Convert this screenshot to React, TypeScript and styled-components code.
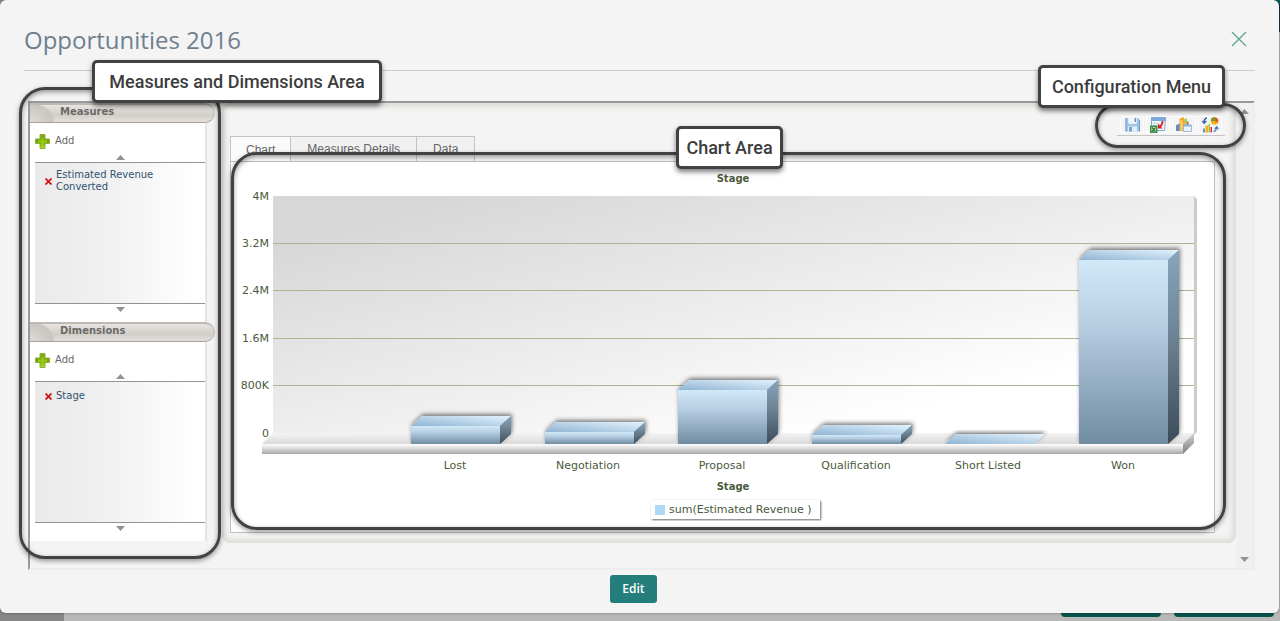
import React from 'react';
import styled, { createGlobalStyle } from 'styled-components';

const Global = createGlobalStyle`
  * { box-sizing: border-box; }
  body { margin: 0; background: #b7b8b7; font-family: "DejaVu Sans", Verdana, sans-serif; }
  button { font: inherit; padding: 0; border: 0; background: none; cursor: pointer; }
`;

const Page = styled.div`
  position: relative;
  background:
    linear-gradient(#0d5a55 4px, #14344a 4px 32px, transparent 32px) right top / 6px 100% no-repeat,
    linear-gradient(90deg, #868786 64px, #b7b8b7 64px);
`;

const Modal = styled.main`
  position: relative;
  margin-right: 1px;
  padding: 0 24px 10px;
  background: #f4f4f4;
  border-radius: 6px;
  box-shadow: 0 0 3px rgba(0, 0, 0, 0.4);
`;

const ModalHeader = styled.header`
  display: flex;
  align-items: center;
  justify-content: space-between;
  height: 71px;
  padding: 9px 8px 0 0;
  border-bottom: 1px solid #cccccc;
`;

const Title = styled.h1`
  margin: 0;
  font: 400 24px/32px "Open Sans", sans-serif;
  color: #6f7f8e;
`;

const CloseButton = styled.button`
  width: 16px;
  height: 16px;
  svg { display: block; }
`;

const Frame = styled.section`
  display: flex;
  align-items: stretch;
  margin: 30px 0 0 4px;
  min-height: 469px;
  border: 2px solid #ededed;
  border-top-color: #999999;
  border-left-color: #999999;
`;

const Sidebar = styled.aside`
  flex: none;
  width: 192px;
`;

const SectionTitle = styled.h2`
  width: 185px;
  height: 20px;
  margin: 0;
  padding-left: 30px;
  font-size: 10px;
  line-height: 14px;
  font-weight: 700;
  color: #6b6a68;
  border-top: 2px solid #bdbab4;
  border-bottom: 1px solid #a8a29b;
  border-right: 1px solid #c4c1bb;
  border-radius: 0 10px 10px 0;
  background:
    radial-gradient(ellipse 25px 20px at 0 100%, #dedbd7 0%, #c9c6c1 90%, transparent 100%),
    linear-gradient(#e8e5e1, #d2cec8 60%, #e4e0dc);
`;

const SectionBody = styled.div`
  width: 177px;
  height: 199px;
  padding: 8px 2px 0 5px;
  background: linear-gradient(90deg, #fff 174px, #d9d9d9 177px);
`;

const AddButton = styled.button`
  display: flex;
  align-items: center;
  gap: 5px;
  height: 20px;
  font-size: 10px;
  color: #666666;
  svg { display: block; }
`;

const AddLabel = styled.span`
  padding-bottom: 2px;
`;

const ScrollButton = styled.button<{ $down?: boolean }>`
  display: flex;
  justify-content: center;
  align-items: ${p => (p.$down ? 'flex-start' : 'flex-end')};
  width: 100%;
  height: 11px;
  padding: ${p => (p.$down ? '3px 0 0' : '0 0 2px')};
  svg { display: block; }
`;

const ItemList = styled.ul`
  height: 142px;
  margin: 0;
  padding: 6px 10px;
  list-style: none;
  border-top: 1px solid #939393;
  border-bottom: 1px solid #939393;
  background: linear-gradient(90deg, #eaeaea, #f0f0f0 40%, #ffffff 95%);
`;

const Item = styled.li`
  display: flex;
  align-items: center;
  gap: 4px;
  min-height: 16px;
  font-size: 10px;
  line-height: 12px;
`;

const RemoveButton = styled.button`
  flex: none;
  width: 7px;
  height: 8px;
  svg { display: block; }
`;

const ItemLink = styled.a`
  color: #31536f;
  text-decoration: none;
`;

const Content = styled.div`
  flex: 1;
  min-width: 0;
  align-self: flex-start;
  height: 440px;
  padding: 0 11px 0 8px;
  background: #f4f4f4;
  border-radius: 8px;
  box-shadow: inset 0 0 5px 4px #dfddd9;
`;

const TopRow = styled.div`
  display: flex;
  justify-content: space-between;
  align-items: flex-end;
  height: 58px;
`;

const Tabs = styled.div`
  display: flex;
`;

const Tab = styled.button<{ $active?: boolean }>`
  height: 25px;
  padding: ${p => (p.$active ? '2px 15px 0' : '0 16px')};
  font: 12px/14px "Liberation Sans", Arial, sans-serif;
  color: #666666;
  background: ${p => (p.$active ? '#fbfbfb' : '#f1f1f1')};
  border: 1px solid #bfc5c7;
  border-bottom: 0;
  & + & { border-left: 0; }
`;

const Toolbar = styled.div`
  display: flex;
  align-self: flex-start;
  gap: 2px;
  margin-top: 13px;
  padding: 0 3px 2px;
  border-bottom: 1px solid #c4c4c4;
`;

const ToolButton = styled.button`
  display: flex;
  align-items: center;
  justify-content: center;
  width: 24px;
  height: 17px;
  background: #f4f4f4;
  border: 1px solid #fcfcfc;
`;

const TabPanel = styled.div`
  height: 372px;
  margin-right: 10px;
  background: #ffffff;
  border: 1px solid #bfbfbf;
`;

const Chart = styled.svg`
  display: block;
  width: 100%;
  height: 370px;
  font-family: "DejaVu Sans", Verdana, sans-serif;
  font-size: 11px;
  fill: #4a5a3a;
`;

const ScrollTrack = styled.div`
  display: flex;
  flex-direction: column;
  justify-content: space-between;
  flex: none;
  width: 17px;
  padding: 2px 0 3px;
  background: #f0f0f0;
`;

const Footer = styled.footer`
  display: flex;
  justify-content: center;
  padding-top: 5px;
`;

const EditButton = styled.button`
  height: 28px;
  width: 47px;
  margin-right: 12px;
  border-radius: 3px;
  background: #237e7c;
  color: #ffffff;
  font: 600 12px/28px "Open Sans", sans-serif;
`;

const Backdrop = styled.div`
  display: flex;
  justify-content: flex-end;
  gap: 13px;
  height: 8px;
  padding-right: 6px;
`;

const BackdropButton = styled.div`
  width: 100px;
  height: 4px;
  background: #07564d;
  border-radius: 0 0 4px 4px;
`;

type Box = { $top: number; $left?: number; $right?: number; $width?: number; $height: number; $radius?: number };

const Outline = styled.div<Box>`
  position: absolute;
  top: ${p => p.$top}px;
  left: ${p => (p.$left === undefined ? 'auto' : `${p.$left}px`)};
  right: ${p => (p.$right === undefined ? 'auto' : `${p.$right}px`)};
  width: ${p => (p.$width ? `${p.$width}px` : 'auto')};
  height: ${p => p.$height}px;
  border: 3px solid #424242;
  border-radius: ${p => p.$radius}px;
  box-shadow: 0 2px 5px rgba(0, 0, 0, 0.4), inset 0 2px 5px rgba(0, 0, 0, 0.4);
  pointer-events: none;
`;

const Callout = styled.div<Box>`
  position: absolute;
  top: ${p => p.$top}px;
  left: ${p => (p.$left === undefined ? 'auto' : `${p.$left}px`)};
  right: ${p => (p.$right === undefined ? 'auto' : `${p.$right}px`)};
  width: ${p => p.$width}px;
  height: ${p => p.$height}px;
  border: 3px solid #424242;
  border-radius: 5px;
  background: #ffffff;
  box-shadow: 0 3px 5px rgba(0, 0, 0, 0.5);
  color: #3c3c3c;
  font: 500 18px/37px Roboto, sans-serif;
  text-align: center;
  white-space: nowrap;
`;

const Plus = () => (
  <svg width="15" height="15" viewBox="0 0 15 15" aria-hidden="true">
    <defs>
      <linearGradient id="plus" x1="0" y1="0" x2="0" y2="1">
        <stop offset="0" stopColor="#86a81c" /><stop offset=".5" stopColor="#6fa008" /><stop offset="1" stopColor="#b4e01c" />
      </linearGradient>
    </defs>
    <path d="M5 .5h5V5h4.500v4.500H10v5H5v-5H.5V5H5z" fill="url(#plus)" stroke="#8cb03c" />
    <path d="M7.500 4v8M3 7.500h9" stroke="#98d00c" strokeWidth="2" />
  </svg>
);

const Cross = () => (
  <svg width="7" height="7" viewBox="0 0 7 7" aria-hidden="true">
    <path d="M.5.5l6 6M6.500.5l-6 6" stroke="#d41414" strokeWidth="1.800" />
  </svg>
);

const Arrow = ({ down }: { down?: boolean }) => (
  <svg width="9" height="5" viewBox="0 0 9 5" aria-hidden="true">
    <path d={down ? 'M0 0h9L4.500 5z' : 'M0 5h9L4.500 0z'} fill="#929292" />
  </svg>
);

const SaveIcon = () => (
  <svg width="15" height="15" viewBox="0 0 15 15" aria-hidden="true">
    <path d="M.5 1h3v5.500h8V1h1.500l1.500 1.500V14.500H.5z" fill="#a3c4e6" />
    <path d="M3.500.5h8v6h-8z" fill="#f2f6fb" /><path d="M9.500 1h1.500v4H9.500z" fill="#6f93bd" />
    <path d="M3 9.500h9v5H3z" fill="#e4eef8" /><path d="M4 10h3v4.500H4z" fill="#7ba3d0" />
    <path d="M1 1v13.500M14.500 3v11.500" stroke="#6c9bcf" />
  </svg>
);

const ExportIcon = () => (
  <svg width="16" height="16" viewBox="0 0 16 16" aria-hidden="true">
    <path d="M1.500.5h14l-1 13h-13z" fill="#eef4fb" stroke="#82a9d8" />
    <path d="M1 .5h15V4H1z" fill="#7fa9dc" /><path d="M3 6.500h5M3 8.500h4" stroke="#c4d2e0" />
    <path d="M12.500 4c0 3-1 4.500-2.500 5.500" stroke="#e31b23" strokeWidth="1.800" fill="none" />
    <path d="M8 6.500v5h4.500z" fill="#e31b23" />
    <path d="M0 8.500h7.500V16H0z" fill="#3d8f42" /><path d="M1.500 10h4.500v4.500H1.500z" fill="#dcefdc" /><path d="M2 10.500l3.500 4M5.500 10.500l-3.500 4" stroke="#2f7a34" strokeWidth="1.300" />
  </svg>
);

const ChartSettingsIcon = () => (
  <svg width="16" height="16" viewBox="0 0 16 16" aria-hidden="true">
    <path d="M0 8.500l2-1.500h2.500v7H0z" fill="#5f8fc6" /><path d="M3.500 2.500l2-2h2.500V14h-4.500z" fill="#f5a524" />
    <path d="M4.500 3h2v10.500h-2z" fill="#ffd465" /><path d="M9 6l1-1.500h2.500v4H9z" fill="#e9483f" />
    <path d="M8 2.500l1.500-1h1.500V8H8z" fill="#a8cf5a" />
    <path d="M7.500 8.500h8v6h-8z" fill="#eaf2fb" stroke="#9cbde2" /><path d="M7.500 8.500h8" stroke="#8fb3dd" strokeWidth="2" />
  </svg>
);

const SwitchChartIcon = () => (
  <svg width="17" height="16" viewBox="0 0 17 16" aria-hidden="true">
    <path d="M5 1C2.500 1 2.200 3 2.200 5.500M.3 4L2.200 6.200 4.300 4" stroke="#2a62a8" strokeWidth="1.300" fill="none" />
    <circle cx="12.500" cy="4" r="3.700" fill="#eab90c" /><path d="M12.500 4V.3A3.700 3.700 0 0 0 8.800 4z" fill="#54a830" />
    <path d="M12.500 4l3.500 1.500A3.700 3.700 0 0 0 12.500.3z" fill="#e5532d" />
    <path d="M1 11.500h2v4H1z" fill="#6896cd" /><path d="M3.500 8.500H6V15.500H3.500z" fill="#f5ad18" /><path d="M6.500 7H8v8.500H6.500z" fill="#8dc63f" /><path d="M8.500 10h1.500v5.500H8.500z" fill="#e0332c" />
    <path d="M11.500 14.500c2.500 0 3-2 3-4.500M12.700 12L14.600 9.800 16.500 12" stroke="#4f81bd" strokeWidth="1.300" fill="none" />
  </svg>
);

const ticks = [
  { label: '4M', y: 35 }, { label: '3.2M', y: 82 }, { label: '2.4M', y: 129 },
  { label: '1.6M', y: 177 }, { label: '800K', y: 224 }, { label: '0', y: 272 },
];

const bars = [
  { label: 'Lost', x: 180, top: 264, cx: 224 },
  { label: 'Negotiation', x: 314, top: 270, cx: 357 },
  { label: 'Proposal', x: 447, top: 228, cx: 491 },
  { label: 'Qualification', x: 581, top: 273, cx: 625 },
  { label: 'Short Listed', x: 714, top: 282, cx: 757 },
  { label: 'Won', x: 848, top: 98, cx: 892 },
];

const FLOOR = 282;
const BAR_W = 89;

const StageChart = () => (
  <Chart viewBox="0 0 983 370" role="img" aria-label="Estimated revenue by stage">
    <defs>
      <linearGradient id="wall" x1=".1" y1=".1" x2=".8" y2=".8">
        <stop offset="0" stopColor="#d7d7d7" /><stop offset="1" stopColor="#ffffff" />
      </linearGradient>
      <linearGradient id="floor" x1="0" y1="0" x2="0" y2="1">
        <stop offset="0" stopColor="#f4f4f4" /><stop offset="1" stopColor="#dadada" />
      </linearGradient>
      <linearGradient id="edge" x1="0" y1="0" x2="0" y2="1">
        <stop offset="0" stopColor="#ffffff" /><stop offset=".4" stopColor="#dedede" /><stop offset="1" stopColor="#a6a6a6" />
      </linearGradient>
      <linearGradient id="corner" x1="0" y1="0" x2="0" y2="1">
        <stop offset="0" stopColor="#d2d2d2" /><stop offset="1" stopColor="#7d7d7d" />
      </linearGradient>
      <linearGradient id="front" x1="0" y1="0" x2="0" y2="1">
        <stop offset="0" stopColor="#d2e9f9" /><stop offset=".35" stopColor="#b7cee3" /><stop offset="1" stopColor="#708ca1" />
      </linearGradient>
      <linearGradient id="lid" x1="0" y1="1" x2="1" y2="0">
        <stop offset="0" stopColor="#8fb4d2" /><stop offset="1" stopColor="#e4f3fe" />
      </linearGradient>
      <linearGradient id="side" x1="0" y1="0" x2="0" y2="1">
        <stop offset="0" stopColor="#86a5bd" /><stop offset=".4" stopColor="#708799" /><stop offset="1" stopColor="#3c4b58" />
      </linearGradient>
      <filter id="barShadow" x="-20%" y="-40%" width="140%" height="180%">
        <feDropShadow dx="1" dy="-2" stdDeviation="2" floodColor="#000" floodOpacity=".5" />
      </filter>
      <filter id="boxShadow"><feDropShadow dx="1" dy="1" stdDeviation="1" floodOpacity=".6" /></filter>
      <clipPath id="aboveFloor"><path d="M0 0h983v282H0z" /></clipPath>
    </defs>

    <path d="M42 34h921v238H42z" fill="url(#wall)" />
    <path d="M963 34l3 3v233l-3 3z" fill="#cbcbcb" />
    {ticks.slice(1, 5).map(t => (
      <path key={t.label} d={`M42 ${t.y - .5}h921`} stroke="#a5b890" />
    ))}
    <path d="M42 271h921l-11 11H31z" fill="url(#floor)" />
    <path d="M31 282h921v10H31z" fill="url(#edge)" />
    <path d="M952 282l11-11v10l-11 11z" fill="url(#corner)" />

    <g clipPath="url(#aboveFloor)">
      {bars.map(({ label, x, top }) => (
        <g key={label} filter="url(#barShadow)">
          <path d={`M${x} ${top}l11-10h${BAR_W}l-11 10z`} fill="url(#lid)" />
          {top < FLOOR && (
            <>
              <path d={`M${x} ${top}h${BAR_W}V${FLOOR}H${x}z`} fill="url(#front)" />
              <path d={`M${x + BAR_W} ${top}l11-10V${FLOOR - 10}l-11 10z`} fill="url(#side)" />
            </>
          )}
        </g>
      ))}
    </g>

    {ticks.map(t => (
      <text key={t.label} x="38" y={t.y + 3} textAnchor="end">{t.label}</text>
    ))}
    {bars.map(b => (
      <text key={b.label} x={b.cx} y="307" textAnchor="middle">{b.label}</text>
    ))}
    <text x="502" y="20" textAnchor="middle" fontSize="10" fontWeight="700">Stage</text>
    <text x="502" y="328" textAnchor="middle" fontSize="10" fontWeight="700">Stage</text>
    <path d="M420 338h169v19H420z" fill="#ffffff" filter="url(#boxShadow)" />
    <path d="M424 343h10v10h-10z" fill="#afd8f8" />
    <text x="438" y="351">sum(Estimated Revenue )</text>
  </Chart>
);

const Section = ({ title, items }: { title: string; items: string[] }) => (
  <section>
    <SectionTitle>{title}</SectionTitle>
    <SectionBody>
      <AddButton type="button"><Plus /><AddLabel>Add</AddLabel></AddButton>
      <ScrollButton type="button" aria-label={`Scroll ${title} up`}><Arrow /></ScrollButton>
      <ItemList>
        {items.map(item => (
          <Item key={item}>
            <RemoveButton type="button" aria-label={`Remove ${item}`}><Cross /></RemoveButton>
            <ItemLink href="#">{item}</ItemLink>
          </Item>
        ))}
      </ItemList>
      <ScrollButton type="button" $down aria-label={`Scroll ${title} down`}><Arrow down /></ScrollButton>
    </SectionBody>
  </section>
);

export default function App() {
  return (
    <Page>
      <Global />
      <Modal>
        <ModalHeader>
          <Title>Opportunities 2016</Title>
          <CloseButton type="button" aria-label="Close">
            <svg width="16" height="16" viewBox="0 0 16 16"><path d="M1 0l14 14M15 0L1 14" stroke="#5aa590" strokeWidth="1.300" /></svg>
          </CloseButton>
        </ModalHeader>

        <Frame>
          <Sidebar>
            <Section title="Measures" items={['Estimated Revenue Converted']} />
            <Section title="Dimensions" items={['Stage']} />
          </Sidebar>
          <Content>
            <TopRow>
              <Tabs role="tablist">
                <Tab type="button" role="tab" aria-selected $active>Chart</Tab>
                <Tab type="button" role="tab">Measures Details</Tab>
                <Tab type="button" role="tab">Data</Tab>
              </Tabs>
              <Toolbar>
                <ToolButton type="button" aria-label="Save"><SaveIcon /></ToolButton>
                <ToolButton type="button" aria-label="Export"><ExportIcon /></ToolButton>
                <ToolButton type="button" aria-label="Chart settings"><ChartSettingsIcon /></ToolButton>
                <ToolButton type="button" aria-label="Switch chart"><SwitchChartIcon /></ToolButton>
              </Toolbar>
            </TopRow>
            <TabPanel role="tabpanel"><StageChart /></TabPanel>
          </Content>
          <ScrollTrack>
            <ScrollButton type="button" aria-label="Scroll up"><Arrow /></ScrollButton>
            <ScrollButton type="button" $down aria-label="Scroll down"><Arrow down /></ScrollButton>
          </ScrollTrack>
        </Frame>

        <Footer><EditButton type="button">Edit</EditButton></Footer>

        <Outline $top={87} $left={19} $width={202} $height={472} $radius={26} />
        <Outline $top={152} $left={231} $right={53} $height={378} $radius={26} />
        <Outline $top={103} $right={33} $width={151} $height={45} $radius={23} />
        <Callout $top={60} $left={92} $width={290} $height={43}>Measures and Dimensions Area</Callout>
        <Callout $top={126} $left={676} $width={107} $height={43}>Chart Area</Callout>
        <Callout $top={65} $right={54} $width={187} $height={43}>Configuration Menu</Callout>
      </Modal>
      <Backdrop><BackdropButton /><BackdropButton /></Backdrop>
    </Page>
  );
}
